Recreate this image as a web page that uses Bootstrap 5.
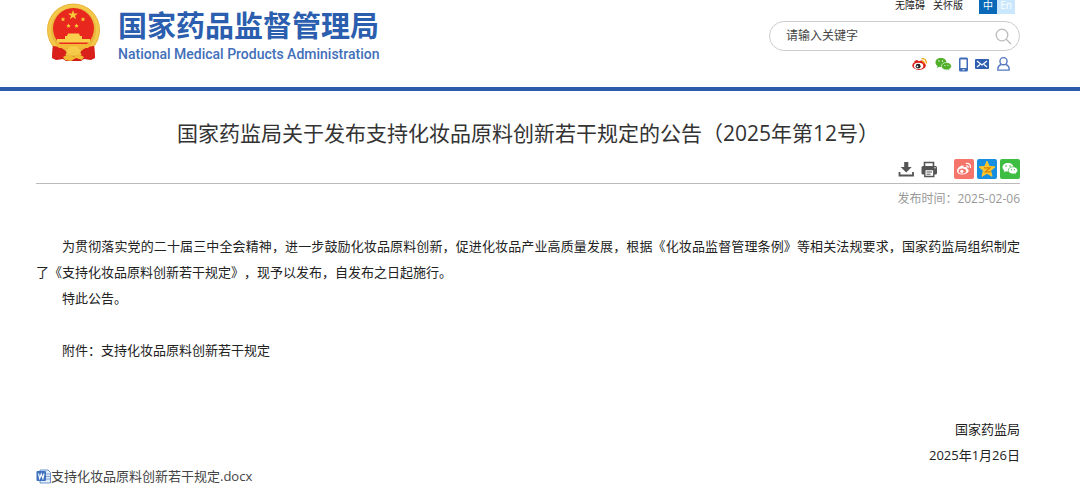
<!DOCTYPE html>
<html lang="zh-CN">
<head>
<meta charset="utf-8">
<meta name="viewport" content="width=device-width, initial-scale=1">
<title>国家药品监督管理局</title>
<link href="https://cdn.jsdelivr.net/npm/bootstrap@5.3.0/dist/css/bootstrap.min.css" rel="stylesheet">
<style>
  body { font-family: "Open Sans", "Noto Sans CJK SC", sans-serif; font-size: 13px; line-height: 26px; color: #222; background: #fff; text-spacing-trim: space-all; }
  a { color: inherit; text-decoration: none; }
  svg { display: block; }
  .page-x { padding-left: 36px; padding-right: 60px; }
  .site-header { border-bottom: 4px solid #2d5cac; height: 91px; }
  .brand { color: #2b5eae; padding: 3px 0 0 10px; gap: 17px; }
  .brand-cn { font-size: 29px; font-weight: 700; line-height: 36px; padding-top: 5px; }
  .brand-en { font-family: Roboto, sans-serif; font-size: 14px; line-height: 20px; font-weight: 500; color: #426fb9; }
  .tools { width: 251px; }
  .top-links { font-size: 10px; line-height: 14px; height: 14px; gap: 8px; padding-right: 5px; }
  .top-links > a { margin-top: -2px; }
  .lang a { display: block; width: 18px; height: 14px; line-height: 11px; text-align: center; color: #fff; background: #0a68b8; }
  .lang a + a { background: #cbe7fd; }
  .search { height: 30px; margin-top: 7px; border: 1px solid #ccc; border-radius: 15px; padding: 0 7px 0 16px; }
  .search input { font-size: 12px; line-height: 18px; color: #333; box-shadow: none !important; background: none; }
  .search input::placeholder { color: #444; opacity: 1; }
  .contact { gap: 7px; padding: 5px 9px 0 0; }
  .contact svg { flex: none; }
  .title { font-size: 21px; line-height: 30px; color: #333; font-weight: 400; margin: 27px 0 0; }
  .share { height: 36px; padding-top: 11px; border-bottom: 1px solid #bbb; gap: 3px; }
  .share .me-print { margin-right: 12px; }
  .tile { width: 20px; height: 20px; border-radius: 2px; }
  .published { font-size: 12px; line-height: 30px; color: #999; }
  .article { padding-top: 19px; }
  .article p { margin: 0; text-indent: 26px; text-align: justify; }
  .article .sign { text-align: right; text-indent: 0; }
  .article .closing { padding-top: 53px; }
  .attach { color: #444; line-height: 16px; padding: 0 0 8px; }
</style>
</head>
<body>
<header class="site-header page-x d-flex justify-content-between align-items-start">
  <a href="#" class="brand d-flex align-items-start">
    <svg width="55" height="59" viewBox="0 0 55 59" aria-hidden="true">
      <path d="M7 40L6 55 10 57 17 56 20 58 35 58 38 56 45 57 49 55 48 40Z" fill="#cf1a16"/>
      <circle cx="27.500" cy="27" r="26.500" fill="#e9b53a"/>
      <circle cx="27.500" cy="27" r="24" fill="none" stroke="#f3c94c" stroke-width="3"/>
      <circle cx="27.500" cy="25.500" r="20.500" fill="#e8281e"/>
      <path d="M27 7l1.200 3.500h3.800l-3 2.200 1.100 3.600-3.100-2.200-3.100 2.200 1.100-3.600-3-2.200h3.800z" fill="#f9c838"/>
      <path id="st" d="M17 14l.7 1.400 1.500.2-1.100 1.100.3 1.500-1.400-.7-1.400.7.300-1.500-1.100-1.100 1.500-.2z" fill="#f9c838"/>
      <use href="#st" x="20"/><use href="#st" x="5.500" y="6.500"/><use href="#st" x="13.500" y="6.500"/>
      <path d="M22 30.500h11l1 2.500h2v3h8v3.500H11V36h8v-3h2z" fill="#f9cf4c"/>
      <path d="M7 43Q15 43 21 49L17 56 6 55ZM48 43Q40 43 34 49L38 56 49 55Z" fill="#d9201b"/>
      <path d="M9 41H46L42 45H13Z" fill="#f3b936"/>
      <path d="M20 49Q22 43 27.500 43T35 49Q31 52 27.500 49 24 52 20 49Z" fill="#f7cb48"/>
      <path d="M17 54Q24 49 27.500 54 31 49 38 54L36 57 30 55 25 58 19 57Z" fill="#f2bb35"/>
    </svg>
    <span>
      <span class="brand-cn d-block">国家药品监督管理局</span>
      <span class="brand-en d-block">National Medical Products Administration</span>
    </span>
  </a>
  <div class="tools">
    <nav class="top-links d-flex justify-content-end">
      <a href="#">无障碍</a><a href="#">关怀版</a>
      <div class="lang d-flex ms-2"><a href="#">中</a><a href="#">En</a></div>
    </nav>
    <form class="search d-flex align-items-center">
      <input type="text" class="form-control border-0 p-0" placeholder="请输入关键字" aria-label="请输入关键字">
      <button type="button" class="btn p-0 border-0" aria-label="搜索">
        <svg width="17" height="17" viewBox="0 0 17 17" fill="none" stroke="#bbb" stroke-width="1.300"><circle cx="7" cy="7" r="5.800"/><path d="M11.200 11.200L16 16"/></svg>
      </button>
    </form>
    <nav class="contact d-flex justify-content-end align-items-center">
      <a href="#" aria-label="微博"><svg width="16" height="16" viewBox="0 0 17 16"><ellipse cx="7.500" cy="9.500" rx="7.200" ry="4.800" fill="#dc211b"/><path d="M2 6Q5 2 7 5q5-2 5 1" fill="#dc211b"/><ellipse cx="7" cy="10" rx="5" ry="3.300" fill="#fff"/><circle cx="6.500" cy="10.300" r="2.600" fill="#222"/><circle cx="5.800" cy="10.600" r=".9" fill="#fff"/><path d="M10 2.500q5-1 5.500 5M10.500 5q2.500-.5 2.500 2.500" fill="none" stroke="#f5aa22" stroke-width="1.400"/></svg></a>
      <a href="#" aria-label="微信"><svg width="17" height="16" viewBox="0 0 17 16"><path d="M6 2C2.500 2 .5 4 .5 6.500c0 1.500.8 2.700 2 3.500L2 12l2.200-1.200L6 11c3.300 0 5.500-2 5.500-4.500S9.300 2 6 2z" fill="#50ae28"/><path d="M11.500 6.500c-3 0-5 1.600-5 3.700s2 3.700 5 3.700l1.500-.2 1.800 1-.4-1.800c1.300-.7 2-1.600 2-2.700 0-2.100-2-3.700-4.900-3.700z" fill="#50ae28" stroke="#fff" stroke-width=".6"/><g fill="#fff"><circle cx="4" cy="5" r=".7"/><circle cx="7.500" cy="5" r=".7"/><circle cx="10" cy="9.500" r=".6"/><circle cx="13" cy="9.500" r=".6"/></g></svg></a>
      <a href="#" aria-label="手机"><svg width="9" height="15" viewBox="0 0 9 15"><rect width="9" height="14" y=".5" rx="1.500" fill="#3f6bb8"/><path d="M1.500 2.500h6v8.500h-6z" fill="#fff"/><path d="M3.500 12.800h2" stroke="#fff"/></svg></a>
      <a href="#" aria-label="邮箱"><svg width="14" height="12" viewBox="0 0 14 12"><rect width="14" height="10" y="1" rx="1" fill="#2e5eb0"/><path d="M2 3L7 7l5-4M2 9l3-2.500M12 9L9 6.500" fill="none" stroke="#fff" stroke-width="1.200"/></svg></a>
      <a href="#" aria-label="用户"><svg width="15" height="16" viewBox="0 0 16 16" fill="none" stroke="#5378c0" stroke-width="1.500"><circle cx="8" cy="5" r="3.800"/><path d="M5.500 8.500Q1.500 10 2 14.500h12Q14.500 10 10.500 8.500"/></svg></a>
    </nav>
  </div>
</header>
<main class="page-x">
  <h1 class="title text-center">国家药监局关于发布支持化妆品原料创新若干规定的公告（2025年第12号）</h1>
  <div class="share d-flex justify-content-end">
    <button type="button" class="btn p-0 border-0 d-flex" aria-label="下载"><svg width="20" height="20" viewBox="0 0 20 20"><path d="M8.200 3h4.100v5h3.400l-5.500 5.500L4.700 8h3.500z" fill="#555"/><path d="M3.500 13v3.500h13.500V13" fill="none" stroke="#555" stroke-width="1.800"/></svg></button>
    <button type="button" class="btn p-0 border-0 d-flex me-print" aria-label="打印"><svg width="20" height="20" viewBox="0 0 20 20"><path d="M5.500 7V3.500h9V7" fill="none" stroke="#555" stroke-width="1.600"/><rect x="2.500" y="7" width="15.500" height="8.500" rx="1.500" fill="#555"/><path d="M5.800 10.500h9v7h-9z" fill="#fff" stroke="#555" stroke-width="1.400"/><path d="M7.500 13h5.500M7.500 15.200h4" stroke="#555"/><circle cx="16" cy="8.800" r=".7" fill="#fff"/></svg></button>
    <a href="#" aria-label="分享到微博"><svg class="tile" viewBox="0 0 20 20"><rect width="20" height="20" fill="#f5756b"/><path d="M3 12c0-3 4-6 6-5.500 1 .2.700 1.500.6 2 2.500-1 4.400-.3 3.700 1.600 3 1 1.200 5.200-4.800 5.400C5 15.600 3 14 3 12z" fill="#fff"/><ellipse cx="8.300" cy="12" rx="3.800" ry="2.600" fill="#f5756b"/><circle cx="7.800" cy="12.300" r="1.600" fill="#fff"/><path d="M11.800 4.500q5-.8 4.700 4.500M12 7q2.400-.4 2.300 1.800" fill="none" stroke="#fff" stroke-width="1.200"/></svg></a>
    <a href="#" aria-label="分享到QQ空间"><svg class="tile" viewBox="0 0 20 20"><rect width="20" height="20" fill="#178fe0"/><path d="M10 2.200l2.200 5.200 5.800.5-4.400 3.700 1.400 5.700-5-3-5 3 1.400-5.700L2 7.900l5.800-.5z" fill="#fcc52d" stroke="#fcc52d" stroke-linejoin="round"/><path d="M7 8.800h6l-4.500 4h5.300" fill="none" stroke="#d78400" stroke-width="1.200"/></svg></a>
    <a href="#" aria-label="分享到微信"><svg class="tile" viewBox="0 0 20 20"><rect width="20" height="20" fill="#3ebd43"/><path d="M8 4C4.700 4 2.500 6 2.500 8.300c0 1.400.7 2.400 1.800 3.200L3.800 13.300l2.200-1 2 .3c3.300 0 5.500-1.900 5.500-4.300S11.300 4 8 4z" fill="#fff"/><path d="M13 7.800c-2.700 0-4.700 1.600-4.700 3.600S10.300 15 13 15l1.500-.2 1.700 1-.4-1.700c1.200-.7 1.900-1.600 1.900-2.700 0-2-2-3.600-4.700-3.600z" fill="#fff" stroke="#3ebd43" stroke-width=".7"/><g fill="#3ebd43"><circle cx="6" cy="7" r=".8"/><circle cx="10" cy="7" r=".8"/><circle cx="11.500" cy="10.700" r=".6"/><circle cx="14.500" cy="10.700" r=".6"/></g></svg></a>
  </div>
  <div class="published text-end">发布时间：2025-02-06</div>
  <article class="article">
    <p>为贯彻落实党的二十届三中全会精神，进一步鼓励化妆品原料创新，促进化妆品产业高质量发展，根据《化妆品监督管理条例》等相关法规要求，国家药监局组织制定了《支持化妆品原料创新若干规定》，现予以发布，自发布之日起施行。</p>
    <p>特此公告。</p>
    <br>
    <p>附件：支持化妆品原料创新若干规定</p>
    <div class="closing">
      <p class="sign">国家药监局</p>
      <p class="sign">2025年1月26日</p>
    </div>
  </article>
  <div class="attach d-flex align-items-center">
    <svg width="15" height="15" viewBox="0 0 15 15" aria-hidden="true"><path d="M4 1h8l2.500 2.500V14H4z" fill="#e4edfa" stroke="#6f94cf"/><path d="M10 5h4M10 7.500h4M10 10h4" stroke="#7fa2d8"/><rect x=".5" y="2" width="9.500" height="10" rx="1" fill="#3e70bd"/><path d="M2.500 4.500l1.200 5 1.600-4.500 1.600 4.500 1.200-5" fill="none" stroke="#fff" stroke-width="1.100"/></svg>
    <a href="#">支持化妆品原料创新若干规定.docx</a>
  </div>
</main>
<script src="https://cdn.jsdelivr.net/npm/bootstrap@5.3.0/dist/js/bootstrap.bundle.min.js"></script>
</body>
</html>
